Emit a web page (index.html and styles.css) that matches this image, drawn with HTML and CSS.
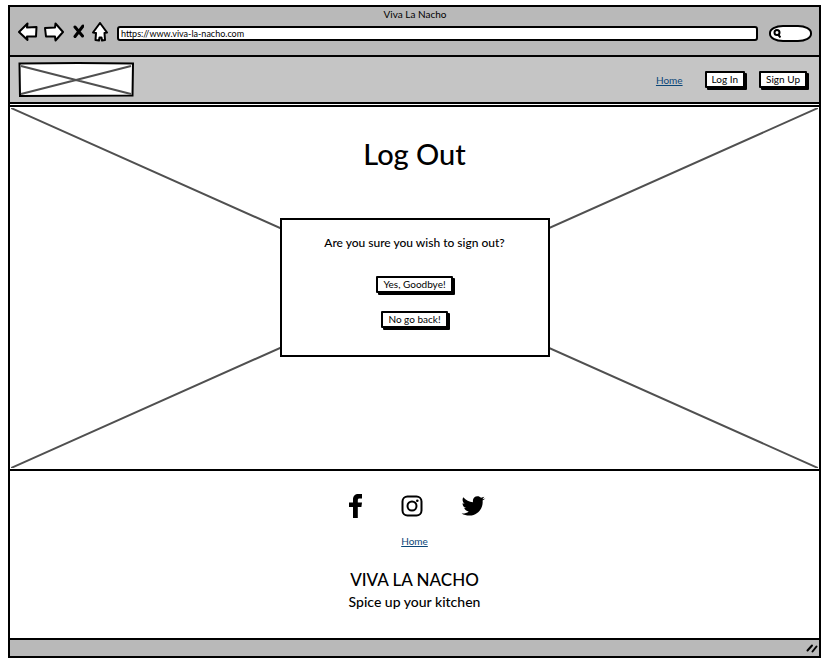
FILE: index.html
```html
<!DOCTYPE html>
<html lang="en">
<head>
<meta charset="utf-8">
<title>Viva La Nacho</title>
<link rel="stylesheet" href="styles.css">
</head>
<body>
<div class="window">
  <div class="chrome">
    <div class="chrome-title">Viva La Nacho</div>
    <div class="toolbar">
      <button class="tool" type="button" aria-label="Back"><svg width="20" height="20" viewBox="0 0 20 20"><path d="M1 10 9.500 1.500 9 5.500 18.500 5 18 14.500 9 14.500 9.500 18Z"/></svg></button>
      <button class="tool" type="button" aria-label="Forward"><svg width="20" height="20" viewBox="0 0 20 20"><path d="M19 10 11.500 1.500 11 5.500 1 6 2 14.500 11 14.500 11.500 18.500Z"/></svg></button>
      <button class="tool tool-stop" type="button" aria-label="Stop"><svg width="12" height="20" viewBox="0 0 12 20"><path class="cross" d="M3 5 10.500 14M11 4 3 14.500"/></svg></button>
      <button class="tool" type="button" aria-label="Home page"><svg width="16" height="20" viewBox="0 0 16 20"><path d="M8 1 1 10.500 4 11 3.500 18 7 18.500 7.500 15.500 9.500 15.500 10 18.500 13 18 12.500 11 15 10.500Z"/></svg></button>
      <input class="address" type="text" aria-label="Address" value="https://www.viva-la-nacho.com">
      <div class="search">
        <svg width="8" height="9" viewBox="0 0 8 9"><circle cx="4" cy="3.500" r="2.500"/><path d="M5 5.500 7.500 8.500"/></svg>
        <input type="search" aria-label="Search">
      </div>
    </div>
  </div>

  <header class="header">
    <svg class="logo" viewBox="0 0 116 35" role="img" aria-label="Logo"><path class="logo-box" d="M1.500 1.500 60 1 115 1.500 114.500 33.500 2 34Z"/><path class="logo-cross" d="M3 4 113 32M113 4 3 32"/></svg>
    <nav class="nav">
      <a href="#">Home</a>
      <button class="btn" type="button">Log In</button>
      <button class="btn" type="button">Sign Up</button>
    </nav>
  </header>

  <main class="hero">
    <svg class="hero-cross" viewBox="0 0 100 100" preserveAspectRatio="none" aria-hidden="true"><path d="M0 0 100 100M100 0 0 100"/></svg>
    <h1>Log Out</h1>
    <section class="card">
      <p>Are you sure you wish to sign out?</p>
      <button class="btn" type="button">Yes, Goodbye!</button>
      <button class="btn" type="button">No go back!</button>
    </section>
  </main>

  <footer class="footer">
    <div class="social">
      <a href="#" aria-label="Facebook"><svg width="14" height="24" viewBox="0 0 14 24"><path d="M4 24V13H0V8.500H4V5.500C4 2 6 0 9.500 0H13V4.500H10.500C9.300 4.500 8.800 5 8.800 6.200V8.500H13L12.400 13H8.800V24Z"/></svg></a>
      <a href="#" aria-label="Instagram"><svg class="outline" width="22" height="22" viewBox="0 0 22 22"><rect x="1.500" y="1.500" width="19" height="19" rx="5"/><circle cx="11" cy="11" r="4.500"/><circle class="dot" cx="16.300" cy="5.700" r="1.300"/></svg></a>
      <a href="#" aria-label="Twitter"><svg width="25" height="21" viewBox="0 0 26 22"><path d="M25.500 2.500 22.500 4.700C23.500 12 18 20.500 9 20.500 5.500 20.500 3 19.700.500 18.300 3.500 18.500 6 17.800 8 16.200 5.500 16 4 14.500 3.300 12.700H5.500C3 12 1.500 10 1.500 7.500L3.700 8C1.500 6.300.900 3.500 2.300 1.200 5 4.400 8.500 6.300 12.500 6.500 11.700 2.800 14 .300 17.200.300 18.700.300 20 .900 20.900 1.900L24.300.700 22.300 3.300Z"/></svg></a>
    </div>
    <a class="footer-link" href="#">Home</a>
    <div class="brand">VIVA LA NACHO</div>
    <p class="tagline">Spice up your kitchen</p>
  </footer>

  <div class="status">
    <svg width="12" height="10" viewBox="0 0 12 10" aria-hidden="true"><path d="M1.500 7.500 6 2.500M6.500 8.500 10.500 3.500"/></svg>
  </div>
</div>
</body>
</html>
```
FILE: styles.css
```css
* {
  box-sizing: border-box;
}

body {
  margin: 0;
  padding: 5px 9px 9px 8px;
  background: #fff;
  color: #000;
  font-family: "Lato", "Liberation Sans", sans-serif;
  font-size: 10px;
  line-height: 12px;
}

button,
input {
  font: inherit;
  color: inherit;
}

h1,
p {
  margin: 0;
}

a {
  color: #0b4678;
}

.window {
  border: 2px solid #000;
}

/* Browser bar */
.chrome {
  padding: 1px 7px 13px 8px;
  background: #b9b9b9;
  border-bottom: 2px solid #000;
}

.chrome-title {
  text-align: center;
}

.toolbar {
  display: flex;
  align-items: center;
  gap: 6px;
  margin-top: 1px;
}

.tool {
  display: flex;
  padding: 0;
  border: 0;
  background: none;
}

.tool-stop {
  margin: 0 2px;
}

.tool path {
  fill: #fff;
  stroke: #000;
  stroke-width: 2;
  stroke-linejoin: round;
}

.tool .cross {
  stroke-width: 3;
  stroke-linecap: round;
}

.address {
  flex: 1;
  min-width: 0;
  height: 15px;
  margin: 4px 5px 0 3px;
  padding: 0 2px;
  border: 2px solid #000;
  border-radius: 3px;
  background: #fff;
  font-size: 9px;
}

.search {
  display: flex;
  align-items: center;
  width: 43px;
  height: 17px;
  margin-top: 4px;
  padding: 0 2px;
  border: 2px solid #000;
  border-radius: 14px / 8px;
  background: #fff;
}

.search svg {
  flex: none;
  fill: none;
  stroke: #000;
  stroke-width: 2;
}

.search input {
  width: 100%;
  min-width: 0;
  height: 11px;
  padding: 0;
  border: 0;
  background: none;
  appearance: none;
}

/* Site header */
.header {
  display: flex;
  align-items: center;
  justify-content: space-between;
  height: 47px;
  margin-bottom: 1px;
  padding: 0 12px 0 8px;
  background: #c5c5c5;
  border-bottom: 2px solid #000;
}

.logo {
  width: 116px;
  height: 35px;
}

.logo-box {
  fill: #fff;
  stroke: #000;
  stroke-width: 2;
}

.logo-cross {
  stroke: #505050;
  stroke-width: 2;
}

.nav {
  display: flex;
  align-items: center;
  gap: 14px;
}

.nav a {
  margin-right: 8px;
}

.btn {
  padding: 1px 5px;
  border: 2px solid #000;
  border-radius: 1px;
  background: #fff;
  box-shadow: 2px 2px #000;
  line-height: 11px;
  white-space: nowrap;
}

/* Main area */
.hero {
  position: relative;
  display: flex;
  flex-direction: column;
  align-items: center;
  padding: 29px 16px 112px;
  border-top: 2px solid #000;
  border-bottom: 2px solid #000;
}

.hero-cross {
  position: absolute;
  inset: 1px;
  width: calc(100% - 2px);
  height: calc(100% - 2px);
}

.hero-cross path {
  stroke: #505050;
  stroke-width: 2;
  vector-effect: non-scaling-stroke;
}

h1 {
  position: relative;
  font-size: 29px;
  line-height: 36px;
  font-weight: 500;
}

.card {
  position: relative;
  display: flex;
  flex-direction: column;
  align-items: center;
  gap: 18px;
  width: 100%;
  max-width: 270px;
  margin-top: 46px;
  padding: 15px 12px 27px;
  border: 2px solid #000;
  background: #fff;
}

.card p {
  margin-bottom: 7px;
  font-size: 12px;
  font-weight: 500;
  line-height: 16px;
}

/* Site footer */
.footer {
  display: flex;
  flex-direction: column;
  align-items: center;
  padding: 23px 16px 25px;
}

.social {
  display: flex;
  align-items: center;
  gap: 38px;
  padding-left: 6px;
}

.social a {
  display: flex;
  color: #000;
}

.social .outline {
  fill: none;
  stroke: #000;
  stroke-width: 2;
}

.social .dot {
  fill: #000;
  stroke: none;
}

.footer-link {
  margin-top: 17px;
}

.brand {
  margin-top: 22px;
  font-size: 17px;
  font-weight: 500;
  line-height: 22px;
}

.tagline {
  font-size: 14px;
  font-weight: 500;
  line-height: 22px;
}

/* Status bar */
.status {
  display: flex;
  align-items: center;
  justify-content: flex-end;
  height: 18px;
  padding-right: 1px;
  background: #b9b9b9;
  border-top: 2px solid #000;
}

.status svg {
  fill: none;
  stroke: #000;
  stroke-width: 2;
  stroke-linecap: round;
}
```
